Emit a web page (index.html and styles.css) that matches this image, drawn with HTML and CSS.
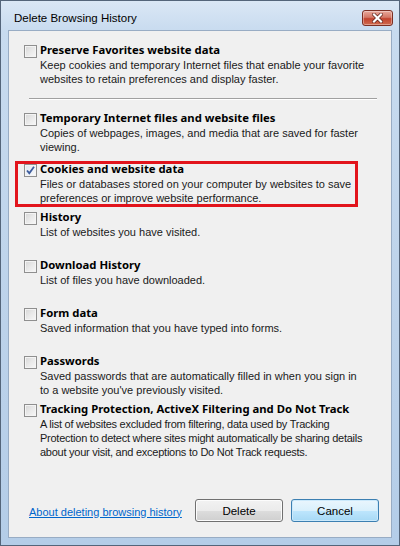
FILE: index.html
```html
<!DOCTYPE html>
<html lang="en">
<head>
    <meta charset="UTF-8">
    <meta name="viewport" content="width=device-width, initial-scale=1.0">
    <title>Delete Browsing History</title>
    <link rel="stylesheet" href="styles.css">
</head>
<body>
    <div class="window">
        <div class="titlebar">
            <span class="title">Delete Browsing History</span>
            <button class="close-btn" aria-label="Close">
                <svg width="11" height="10" viewBox="0 0 11 10">
                    <path d="M2 1.5 L9 8.5 M9 1.5 L2 8.5" stroke="#5a1f17" stroke-width="3.6" stroke-linecap="square"/>
                    <path d="M2 1.5 L9 8.5 M9 1.5 L2 8.5" stroke="#ffffff" stroke-width="2.2" stroke-linecap="square"/>
                </svg>
            </button>
        </div>
        <div class="content">
            <div class="options">
                <div class="option first">
                    <label class="option-title"><span class="checkbox"></span>Preserve Favorites website data</label>
                    <p class="option-desc">Keep cookies and temporary Internet files that enable your favorite<br>websites to retain preferences and display faster.</p>
                </div>
                <hr class="separator">
                <div class="option tall">
                    <label class="option-title"><span class="checkbox"></span>Temporary Internet files and website files</label>
                    <p class="option-desc">Copies of webpages, images, and media that are saved for faster<br>viewing.</p>
                </div>
                <div class="option short highlighted">
                    <label class="option-title"><span class="checkbox checked">
                        <svg width="9" height="9" viewBox="0 0 9 9">
                            <path d="M1 4.5 L3.3 7.2 L8 0.8" fill="none" stroke="#3d5c9c" stroke-width="1.8"/>
                        </svg>
                    </span>Cookies and website data</label>
                    <p class="option-desc">Files or databases stored on your computer by websites to save<br>preferences or improve website performance.</p>
                </div>
                <div class="option">
                    <label class="option-title"><span class="checkbox"></span>History</label>
                    <p class="option-desc">List of websites you have visited.</p>
                </div>
                <div class="option">
                    <label class="option-title"><span class="checkbox"></span>Download History</label>
                    <p class="option-desc">List of files you have downloaded.</p>
                </div>
                <div class="option">
                    <label class="option-title"><span class="checkbox"></span>Form data</label>
                    <p class="option-desc">Saved information that you have typed into forms.</p>
                </div>
                <div class="option">
                    <label class="option-title"><span class="checkbox"></span>Passwords</label>
                    <p class="option-desc">Saved passwords that are automatically filled in when you sign in<br>to a website you've previously visited.</p>
                </div>
                <div class="option">
                    <label class="option-title"><span class="checkbox"></span>Tracking Protection, ActiveX Filtering and Do Not Track</label>
                    <p class="option-desc tight">A list of websites excluded from filtering, data used by Tracking<br>Protection to detect where sites might automatically be sharing details<br>about your visit, and exceptions to Do Not Track requests.</p>
                </div>
            </div>
            <div class="footer">
                <a class="help-link" href="#">About deleting browsing history</a>
                <div class="buttons">
                    <button class="btn">Delete</button>
                    <button class="btn default">Cancel</button>
                </div>
            </div>
        </div>
    </div>
</body>
</html>
```

FILE: styles.css
```css
body {
    margin: 0;
    font-family: "Liberation Sans", Arial, sans-serif;
    font-size: 11px;
    color: #000;
    background: #fff;
}

.window {
    width: 400px;
    height: 546px;
    box-sizing: border-box;
    border: 1px solid #54657a;
    background: linear-gradient(to bottom, #dae7f5 0, #c8dbef 30px, #bcd2ea 60%, #b4cde8 100%);
    display: flex;
    flex-direction: column;
}

.titlebar {
    height: 29px;
    display: flex;
    align-items: center;
    justify-content: space-between;
    padding: 0 6px 0 13px;
}

.title {
    font-size: 11.5px;
    margin-top: 5px;
}

.close-btn {
    width: 31px;
    height: 16px;
    margin-top: 5px;
    padding: 0;
    border: 1px solid #7b2f24;
    border-radius: 3px;
    background: linear-gradient(to bottom, #e9a99c 0, #d47867 45%, #c2432e 55%, #cf6a4e 100%);
    box-shadow: inset 0 0 0 1px rgba(255, 255, 255, 0.35);
    display: flex;
    align-items: center;
    justify-content: center;
}

.content {
    flex: 1;
    margin: 0 7px 7px 7px;
    border: 1px solid #98acc4;
    background: #f0f0f0;
    display: flex;
    flex-direction: column;
}

.options {
    padding-top: 12px;
}

.option {
    position: relative;
    height: 48px;
    padding-left: 15px;
    box-sizing: border-box;
}

.option.first {
    height: 43px;
}

.option.tall {
    height: 51px;
}

.option.short {
    height: 48px;
}

.option.highlighted::after {
    content: "";
    position: absolute;
    top: -1px;
    left: 6px;
    width: 343px;
    height: 46px;
    box-sizing: border-box;
    border: 3px solid #e2141c;
}

.option-title {
    display: flex;
    align-items: flex-start;
    gap: 3px;
    line-height: 14px;
    font-family: "Noto Sans", "Open Sans", sans-serif;
    font-size: 11.3px;
    font-weight: bold;
}

.checkbox {
    width: 13px;
    height: 13px;
    margin-top: 2px;
    box-sizing: border-box;
    border: 1px solid #8f8f8f;
    background: linear-gradient(135deg, #d6d6d6 0, #e9e9e9 50%, #f8f8f8 100%);
    box-shadow: inset 0 0 0 1px #f4f4f4;
    display: flex;
    align-items: center;
    justify-content: center;
    flex-shrink: 0;
}

.checkbox.checked {
    background: linear-gradient(135deg, #dfe6ef 0, #eef2f7 60%, #fbfbfb 100%);
}

.option-desc {
    margin: 0 0 0 16px;
    line-height: 14px;
    color: #1a1a1a;
    white-space: nowrap;
}

.option-desc.tight {
    letter-spacing: -0.25px;
}

.separator {
    margin: 12px 14px 11px 20px;
    border: 0;
    border-top: 1px solid #a0a0a0;
    border-bottom: 1px solid #fff;
}

.footer {
    margin-top: auto;
    padding: 0 12px 15px 20px;
    display: flex;
    align-items: center;
    justify-content: space-between;
}

.help-link {
    color: #0066cc;
    white-space: nowrap;
    margin-top: 2px;
}

.buttons {
    display: flex;
    gap: 8px;
}

.btn {
    width: 88px;
    height: 23px;
    font-family: inherit;
    font-size: 11.5px;
    color: #000;
    border: 1px solid #707070;
    border-radius: 3px;
    background: linear-gradient(to bottom, #f2f2f2 0, #ebebeb 50%, #dddddd 51%, #cfcfcf 100%);
    box-shadow: inset 0 0 0 1px #fcfcfc;
}

.btn.default {
    border-color: #3c7fb1;
    background: linear-gradient(to bottom, #eaf6fd 0, #d9f0fc 50%, #bee6fd 51%, #a7d9f5 100%);
    box-shadow: inset 0 0 0 1px #cbe9fb;
}
```
